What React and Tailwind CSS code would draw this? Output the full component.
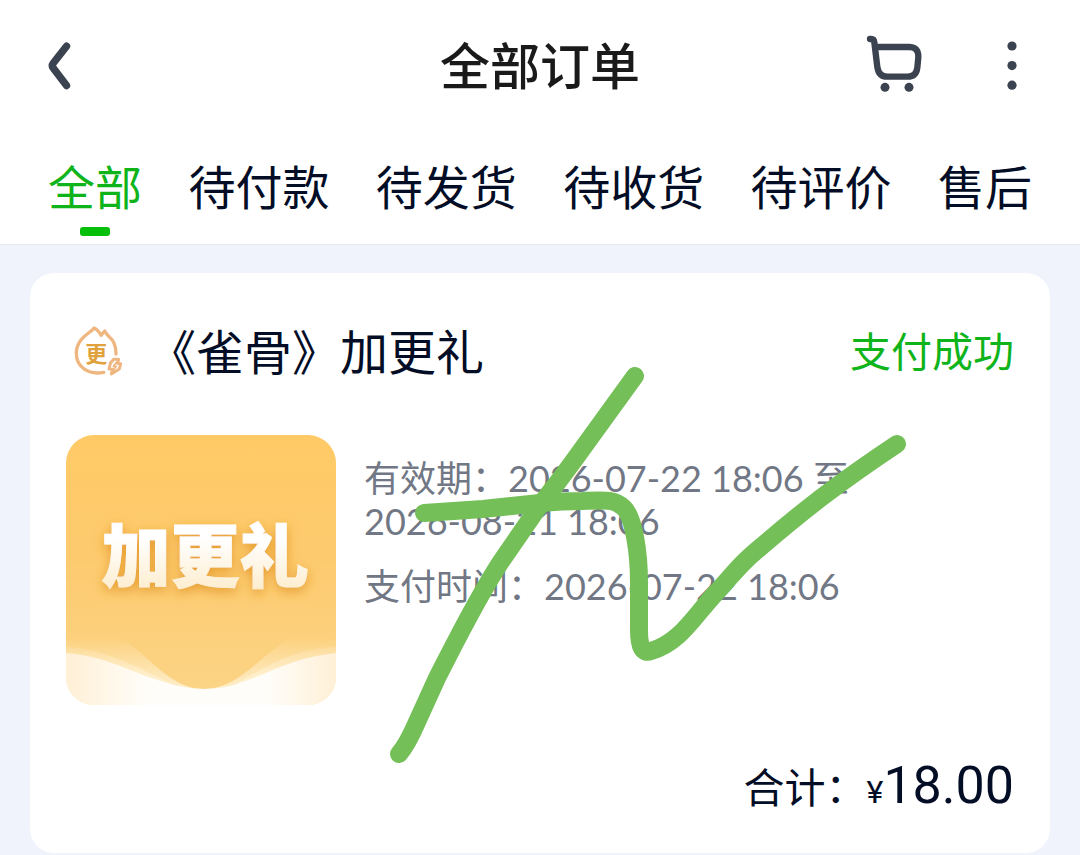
import React, { useState } from "react";

const TABS = ["全部", "待付款", "待发货", "待收货", "待评价", "售后"];

function BackIcon() {
  return (
    <svg viewBox="0 0 24 48" className="h-12 w-6" fill="none" stroke="#3b4250" strokeWidth="7.4" strokeLinecap="round" strokeLinejoin="round" aria-hidden="true">
      <path d="M19.5 4.2 6 21.6Q4.6 23.7 6 25.8L19.5 43.5" />
    </svg>
  );
}

function CartIcon() {
  return (
    <svg viewBox="75 69 174 180" className="h-[60px] w-[58px]" fill="none" stroke="#3b4250" strokeWidth="19" strokeLinecap="round" strokeLinejoin="round" aria-hidden="true">
      <path d="M90 84H93Q102 84 103 94L112 168Q116 197 142 197H203Q229 197 232 170L235 138Q236 108 207 108H108" />
      <g fill="#3b4250" stroke="none">
        <circle cx="135" cy="229" r="13.5" />
        <circle cx="207" cy="229" r="13.5" />
      </g>
    </svg>
  );
}

function MoreIcon() {
  return (
    <svg viewBox="0 0 10 50" className="h-[50px] w-[10px]" fill="#3b4250" aria-hidden="true">
      <circle cx="5" cy="5" r="4.6" />
      <circle cx="5" cy="24.6" r="4.6" />
      <circle cx="5" cy="44.2" r="4.6" />
    </svg>
  );
}

function BadgeIcon() {
  return (
    <svg viewBox="72 74 150 156" className="h-[52px] w-[50px] shrink-0" fill="none" strokeLinecap="round" strokeLinejoin="round" aria-hidden="true">
      <path d="M198 158C198 134 190 116 178 107Q169 98 164 89L153 102Q145 86 132 80C125 94 79 108 79 156C79 198 116 222 161 213" stroke="#f0b67f" strokeWidth="10" />
      <path d="M191 174H206L202 186L212 187L208 203L184 218L188 204L177 203L181 186Z" stroke="#f0b67f" strokeWidth="9" />
      <path d="M198 184 190 195H199L191 206" stroke="#f0b67f" strokeWidth="5" />
      <text x="139" y="181" textAnchor="middle" fontSize="66" fontWeight="700" fill="#dfa23c">更</text>
    </svg>
  );
}

function Cover() {
  return (
    <svg viewBox="0 0 270 270" className="size-[270px] shrink-0 rounded-[28px]" role="img" aria-label="加更礼">
      <defs>
        <linearGradient id="sky" x1="0" y1="0" x2="0" y2="1">
          <stop offset="0" stopColor="#ffca66" />
          <stop offset="0.45" stopColor="#fdca6e" />
          <stop offset="1" stopColor="#fbd588" />
        </linearGradient>
        <linearGradient id="letter" x1="0" y1="0" x2="0" y2="1">
          <stop offset="0.3" stopColor="#ffffff" />
          <stop offset="1" stopColor="#fdebc8" />
        </linearGradient>
        <linearGradient id="veil" gradientUnits="userSpaceOnUse" x1="0" y1="202" x2="0" y2="254">
          <stop offset="0" stopColor="#fff3d6" stopOpacity="0" />
          <stop offset="1" stopColor="#fff3d6" stopOpacity="0.85" />
        </linearGradient>
        <linearGradient id="snow" x1="0" y1="0" x2="1" y2="0">
          <stop offset="0" stopColor="#fff0d6" />
          <stop offset="0.3" stopColor="#fffdf9" />
          <stop offset="0.75" stopColor="#fffdf9" />
          <stop offset="1" stopColor="#fff0d6" />
        </linearGradient>
        <filter id="glow" x="-20%" y="-30%" width="140%" height="170%">
          <feDropShadow dx="0" dy="4" stdDeviation="6" floodColor="#df8f1c" floodOpacity="0.75" />
        </filter>
      </defs>
      <rect width="270" height="270" fill="url(#sky)" />
      <path d="M0 205C20 205 36 194 52 202C82 217 102 254 138 254V270H0Z" fill="url(#veil)" />
      <path d="M270 205C255 203 244 192 228 201C194 219 174 254 138 254V270H270Z" fill="url(#veil)" />
      <path d="M0 212C40 214 70 232 108 250L0 262Z" fill="url(#veil)" />
      <path d="M270 212C235 212 205 228 168 250L270 262Z" fill="url(#veil)" />
      <path d="M0 218C48 222 72 243 118 252Q138 256 160 252C200 242 218 224 270 218V270H0Z" fill="url(#snow)" />
      <text x="139" y="147" textAnchor="middle" fontSize="69" fontWeight="900" fill="url(#letter)" stroke="url(#letter)" strokeWidth="1" filter="url(#glow)">加更礼</text>
    </svg>
  );
}

function PenMarks() {
  return (
    <svg viewBox="30 273 1020 580" className="pointer-events-none absolute top-0 left-0 h-[580px] w-[1020px]" fill="none" stroke="#74bf57" strokeWidth="18" strokeLinecap="round" strokeLinejoin="round" aria-hidden="true">
      <path d="M635 376L580 452C560 480 550 492 538 508L500 563C475 602 455 643 437 678L417 722Q407 745 399 754" />
      <path d="M424 513L483 509L540 503Q562 501 583 501C605 500 615 499 624 508C634 518 639 553 639 583V630Q639 656 651 651C680 643 695 615 715 594C735 572 740 564 762 546C805 509 840 482 897 444" />
    </svg>
  );
}

export default function App() {
  const [active, setActive] = useState(0);
  return (
    <div lang="zh-CN" className="min-h-screen bg-[#f0f3fc] font-['Lato','Noto_Sans_CJK_SC',sans-serif] text-[#030d26]">
      <header className="border-b border-[#e6e8ee] bg-white">
        <div className="grid h-[132px] grid-cols-[1fr_auto_1fr] items-center pr-[63px] pl-[47px]">
          <button type="button" aria-label="返回" className="justify-self-start">
            <BackIcon />
          </button>
          <h1 className="ml-4 text-[50px] leading-[66px] font-medium text-[#1a1a1a]">全部订单</h1>
          <div className="flex items-center gap-[84px] justify-self-end">
            <button type="button" aria-label="购物车" className="-mt-1">
              <CartIcon />
            </button>
            <button type="button" aria-label="更多">
              <MoreIcon />
            </button>
          </div>
        </div>
        <nav className="flex justify-between px-12 pt-[23px] pb-2">
          {TABS.map((tab, i) => (
            <button
              key={tab}
              type="button"
              onClick={() => setActive(i)}
              className={
                i === active
                  ? "flex flex-col items-center gap-2 text-[#0fb31a]"
                  : "flex flex-col items-center gap-2 text-[#030d26]"
              }
            >
              <span className="text-[47px] leading-[64px] whitespace-nowrap">{tab}</span>
              <span className={i === active ? "h-[9px] w-[30px] rounded-[3px] bg-[#06bf0a]" : "h-[9px] w-[30px]"} />
            </button>
          ))}
        </nav>
      </header>

      <main className="px-[30px] pt-7">
        <article className="relative rounded-[24px] bg-white px-9 pt-[46px] pb-[34px]">
          <div className="flex h-[66px] items-center">
            <div className="pl-2">
              <BadgeIcon />
            </div>
            <h2 className="ml-6 text-[48px] leading-[66px]">《雀骨》加更礼</h2>
            <span className="ml-auto text-[41px] leading-[66px] text-[#0fb31a]">支付成功</span>
          </div>
          <div className="mt-[50px] flex gap-7">
            <Cover />
            <div className="flex flex-col gap-[22px] pt-[22px] text-[36px] leading-[43px] text-[#717784]">
              <p>
                有效期：2026-07-22 18:06 至
                <br />
                2026-08-21 18:06
              </p>
              <p>支付时间：2026-07-22 18:06</p>
            </div>
          </div>
          <div className="mt-12 flex h-[66px] items-baseline justify-end font-['Roboto','Noto_Sans_CJK_SC',sans-serif]">
            <span className="text-[41px] leading-[66px]">合计：</span>
            <span className="text-[32px] leading-[66px]">¥</span>
            <span className="text-[52px] leading-[66px]">18.00</span>
          </div>
          <PenMarks />
        </article>
      </main>
    </div>
  );
}
